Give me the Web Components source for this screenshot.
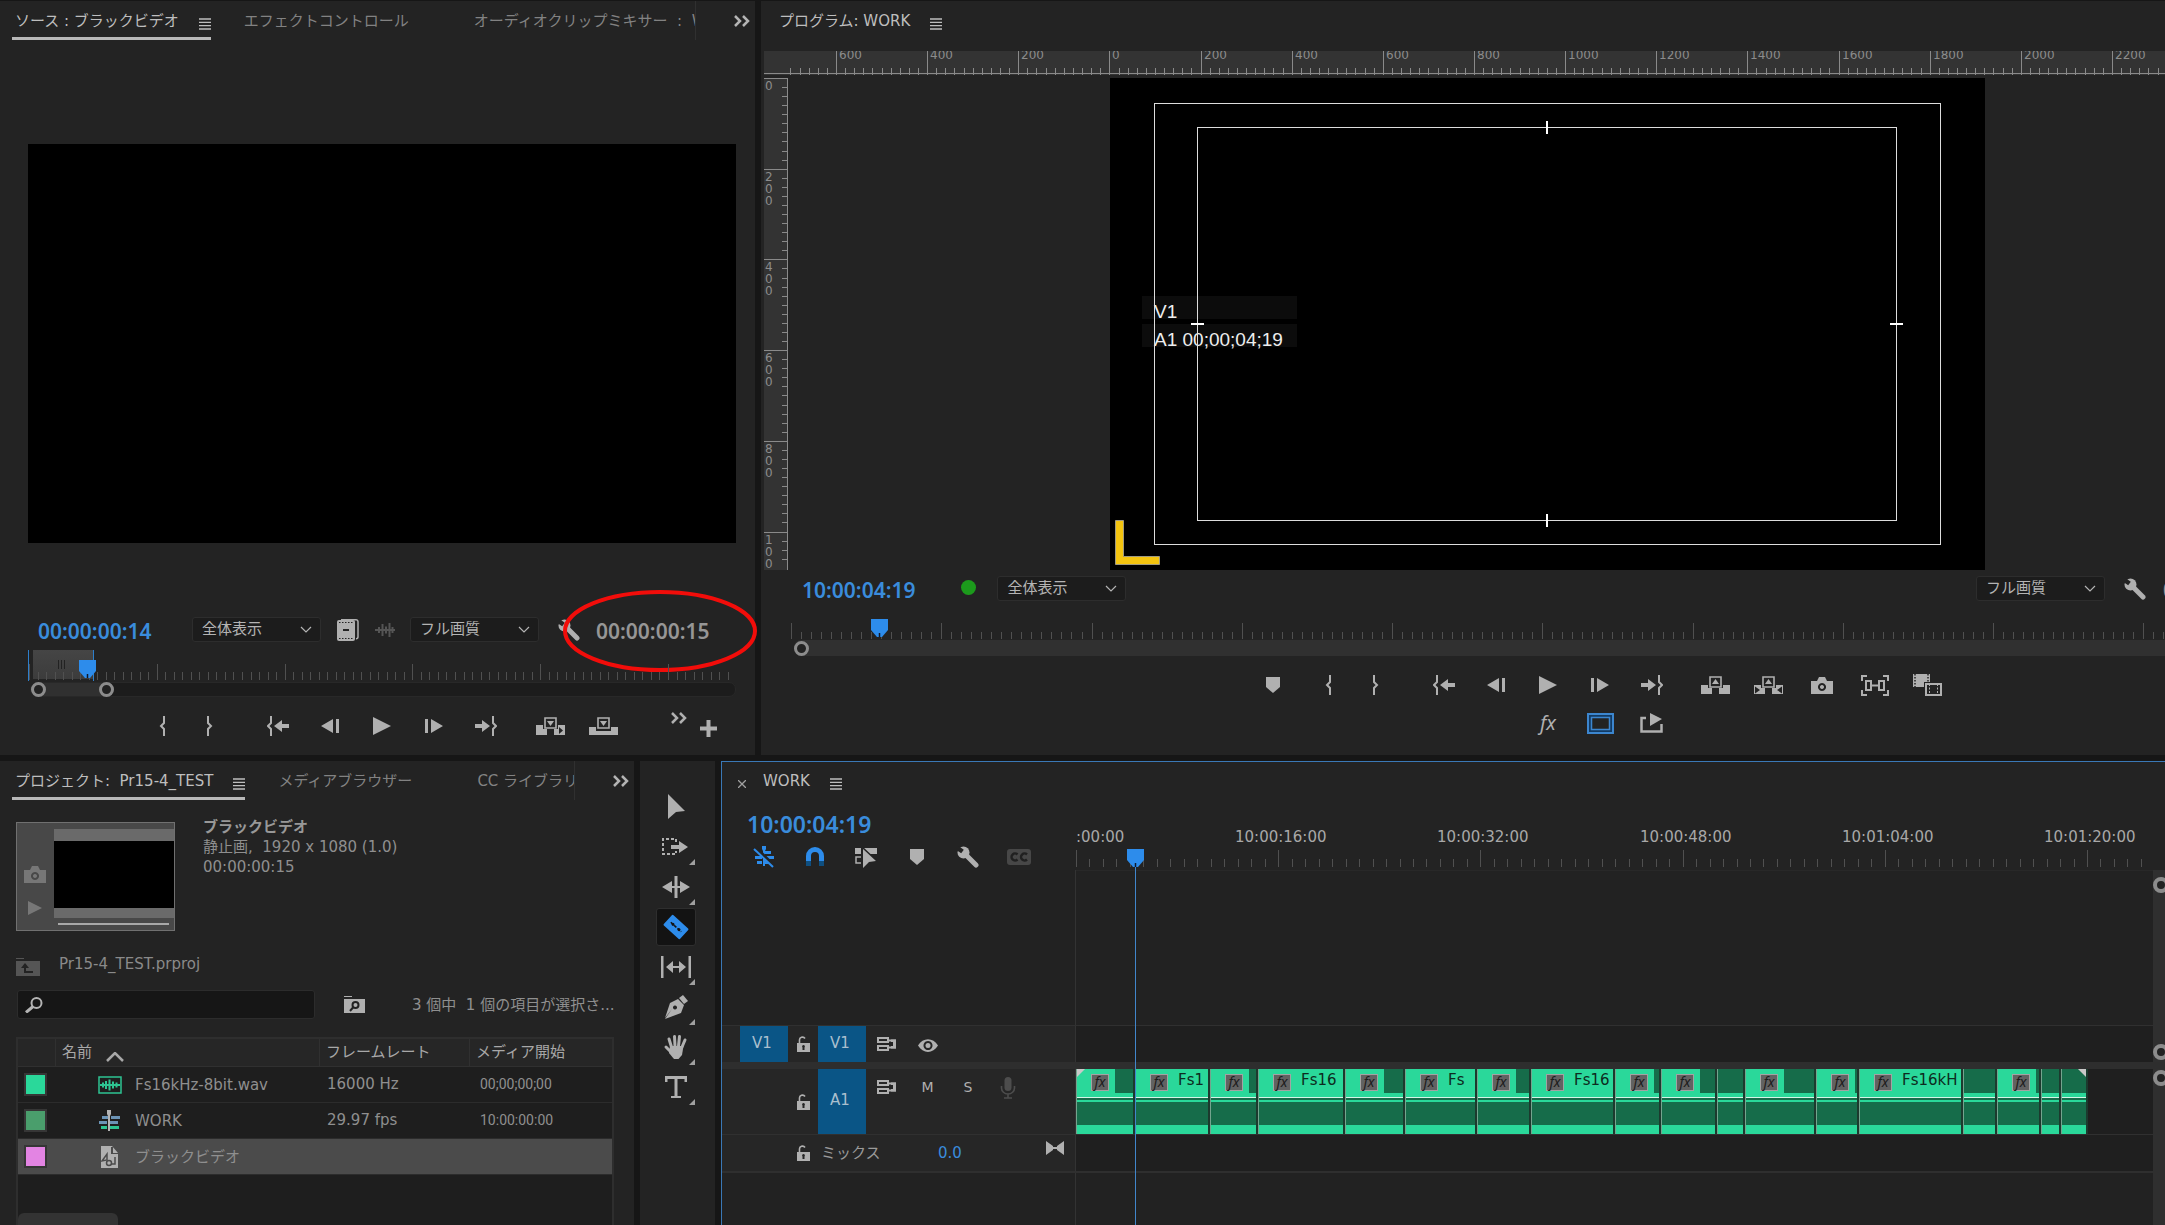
<!DOCTYPE html>
<html lang="ja">
<head>
<meta charset="utf-8">
<title>WORK</title>
<style>
  html, body { margin: 0; height: 100%; background: #161616; overflow: hidden; }
  body { font: 15px/20px "DejaVu Sans", "Noto Sans CJK JP", sans-serif; color: #b4b4b4; }
</style>
</head>
<body>
<editor-app></editor-app>
<script>
const base = `<style>
  :host { display: block; box-sizing: border-box; }
  * { box-sizing: border-box; }
  button, input, select { font: inherit; color: inherit; margin: 0; border: 0; background: none; padding: 0; outline: 0; }
</style>`;
const define = (tag, render) => customElements.define(tag, class extends HTMLElement {
  connectedCallback() {
    if (this.shadowRoot) return;
    this.attachShadow({ mode: "open" }).innerHTML = base + render(this);
  }
});

/* ---------- icons: [width, height, markup] ---------- */
const B = "#232323";
const box = `<path fill="${B}" d="M7 0h15v12H7z"/><path fill="none" stroke="currentColor" stroke-width="1.6" d="M9 1h11v10H9z"/>`;
const icons = {
  marker: [14, 16, `<path d="M0 0h14v10l-7 6-7-6z"/>`],
  braceIn: [8, 20, `<path fill="none" stroke="currentColor" stroke-width="2" d="M6 0v7L3 10l3 3v7"/>`],
  braceOut: [8, 20, `<path fill="none" stroke="currentColor" stroke-width="2" d="M2 0v7l3 3-3 3v7"/>`],
  gotoIn: [22, 20, `<path fill="none" stroke="currentColor" stroke-width="2" d="M4 0v7l-3 3 3 3v7"/><path d="M22 8h-7V4l-8 6 8 6v-4h7z"/>`],
  gotoOut: [22, 20, `<path fill="none" stroke="currentColor" stroke-width="2" d="M18 0v7l3 3-3 3v7"/><path d="M0 8h7V4l8 6-8 6v-4H0z"/>`],
  stepBack: [18, 14, `<path d="M12 0v14L0 7zM15 0h3v14h-3z"/>`],
  stepFwd: [18, 14, `<path d="M6 0v14l12-7zM0 0h3v14H0z"/>`],
  play: [18, 18, `<path d="M0 0l18 9L0 18z"/>`],
  insert: [29, 18, `<path d="M0 8h11v10H0zM18 8h11v10H18z"/>${box}<path d="M11 4h7l-3.500 5z"/><path fill="${B}" d="M23 10l4 3.500-4 3.500z"/>`],
  overwrite: [29, 18, `<path d="M0 10h29v8H0z"/>${box}<path d="M11 4h7l-3.500 5z"/><path fill="${B}" d="M7 12h15v2H7z"/>`],
  lift: [29, 18, `<path d="M0 9h11v9H0zM18 9h11v9H18z"/>${box}<path d="M11 8h7l-3.500-5z"/>`],
  extract: [29, 18, `<path d="M0 9h11v9H0zM18 9h11v9H18z"/>${box}<path d="M11 8h7l-3.500-5z"/><path fill="${B}" d="M1 10.500l5 3.500-5 3.500zM28 10.500l-5 3.500 5 3.500z"/>`],
  camera: [22, 17, `<path fill-rule="evenodd" d="M0 4h6l2-4h6l2 4h6v13H0zM11 6a4 4 0 1 0 .01 0zM11 8a2 2 0 1 1-.01 0z"/>`],
  compare: [28, 21, `<g fill="none" stroke="currentColor" stroke-width="2"><path d="M1 6V1h5M22 1h5v5M27 15v5h-5M6 20H1v-5M5 6h5v9H5zM18 6h5v9h-5zM10 10.500h8"/></g>`],
  proxy: [29, 22, `<path d="M0 0h17v13H0z"/><path stroke="${B}" stroke-width="1.500" stroke-dasharray="1.500 1.500" d="M2 0v13M15 0v13"/><path fill="${B}" d="M11 8h18v14H11z"/><path fill="none" stroke="currentColor" stroke-width="2" d="M13 10h15v11H13z"/><path stroke="currentColor" stroke-dasharray="2 1.500" d="M16.500 10v11M24.500 10v11"/>`],
  safe: [27, 21, `<path fill="#123a63" stroke="#3c86cf" stroke-width="2" d="M1 1h25v19H1z"/><path fill="${B}" stroke="#3c86cf" stroke-width="1.500" d="M4.500 4.500h18v12h-18z"/>`],
  exportFrame: [24, 20, `<path fill="none" stroke="currentColor" stroke-width="2.500" d="M6 5H1.500v13.500h20V11"/><path d="M10 0l12 6-12 7z"/>`],
  wrench: [22, 22, `<circle cx="6.500" cy="6.500" r="6"/><path stroke="currentColor" stroke-width="5" stroke-linecap="round" d="M8 8l11 11"/><path stroke="${B}" stroke-width="4.500" d="M-1 1l6.500 4.500"/>`],
  film: [22, 22, `<rect x="0" y="1" width="18" height="21" rx="2"/><path fill="none" stroke="currentColor" stroke-width="1.500" d="M4 .8h15a2 2 0 0 1 2 2v15a2 2 0 0 1-2 2"/><path fill="none" stroke="${B}" stroke-dasharray="1.500 1.500" d="M2 3.500h15M2 19.500h15"/><path stroke="${B}" stroke-width="2" d="M6 11h6"/>`],
  wave: [20, 14, `<path fill="none" stroke="currentColor" stroke-width="2" d="M0 7h20M4 4v6M7.500 1v12M11 3.500v7M14.500 0v14M17.500 4v6"/>`],
  more: [16, 12, `<path fill="none" stroke="currentColor" stroke-width="2.500" d="M1 1l5 5-5 5M9 1l5 5-5 5"/>`],
  plus: [17, 17, `<path d="M6.500 0h4v6.500H17v4h-6.500V17h-4v-6.500H0v-4h6.500z"/>`],
  menu: [12, 12, `<path stroke="currentColor" stroke-width="1.300" d="M0 1h12M0 4.300h12M0 7.700h12M0 11h12"/>`],
  close: [8, 8, `<path stroke="currentColor" stroke-width="1.300" d="M0 0l8 8M8 0L0 8"/>`],
  chevron: [12, 7, `<path fill="none" stroke="currentColor" stroke-width="1.200" d="M1 1l5 5 5-5"/>`],
  sortUp: [18, 10, `<path fill="none" stroke="currentColor" stroke-width="2.500" d="M1 9l8-8 8 8"/>`],
  playSmall: [14, 14, `<path d="M0 0l14 7-14 7z"/>`],
  folderUp: [24, 18, `<path d="M0 0h8v1H0zM0 3h24v15H0z"/><path fill="none" stroke="${B}" stroke-width="2" d="M9 9v5h8"/><path fill="${B}" d="M5 10l4-5 4 5z"/>`],
  search: [18, 16, `<circle cx="11.500" cy="6" r="5" fill="none" stroke="currentColor" stroke-width="2"/><path stroke="currentColor" stroke-width="3" d="M8 9.500L1 15.500"/>`],
  folderSearch: [21, 17, `<path d="M0 0h8v1H0zM0 3h21v14H0z"/><circle cx="11.500" cy="9" r="3" fill="none" stroke="${B}" stroke-width="2"/><path stroke="${B}" stroke-width="2" d="M9 11.500L6 15"/>`],
  audio: [24, 18, `<g fill="none" stroke="#2ec492"><path stroke-width="1.500" d="M1 1h22v16H1z"/><path stroke-width="2" d="M2 9h20M5 6.500v5M8 5v8M11.500 3.500v11M15 5.500v7M18.500 6.500v5"/></g>`],
  sequence: [24, 22, `<path fill="#6b93b5" d="M4 6h7v3H4zM13 6h9v3h-9zM1 11h8v3H1zM12 11h8v3h-8z"/><path fill="#2ec492" d="M3 16h6v3H3zM12 16h9v3h-9z"/><path fill="#b4b4b4" d="M9 0h4v4l-1 2v15h-2V6L9 4z"/>`],
  still: [24, 22, `<path d="M3 0h11l6 7v15H3z"/><path fill="#4b4b4b" d="M13 1v7h7v-1h-5V1z"/><path fill="none" stroke="#4b4b4b" stroke-width="1.500" d="M4 15l5-7v6zM17 11v7h-4"/><circle cx="11" cy="17" r="2.500" fill="none" stroke="#4b4b4b" stroke-width="1.500"/>`],
  select: [20, 26, `<path d="M2 0l17 17-9 1-8 7z"/>`],
  trackSelect: [28, 18, `<path fill="none" stroke="currentColor" stroke-width="2" stroke-dasharray="3 2" d="M14 4V1H1v15h13v-3"/><path d="M9 7h8V3l9 6-9 6v-4H9z"/>`],
  ripple: [30, 22, `<path d="M13.500 0h3v22h-3zM11 5v12L1 11zM19 5v12l10-6z"/><path d="M9 10h12v2H9z"/>`],
  razor: [26, 26, `<g transform="rotate(42 13 13)"><rect x="2" y="6" width="22" height="14" rx="1"/><path fill="none" stroke="#131313" stroke-width="1.500" stroke-dasharray="3 1.500" d="M6 13h14"/><circle cx="9" cy="13" r="1.500" fill="#131313"/><circle cx="17" cy="13" r="1.500" fill="#131313"/></g>`],
  slip: [30, 22, `<path d="M0 0h2.500v22H0zM27.500 0H30v22h-2.500zM12 5v12l-7-6zM18 5v12l7-6z"/><path d="M9 10h12v2H9z"/>`],
  pen: [26, 26, `<path d="M16 4l4-3 5 6-4 3z"/><path fill-rule="evenodd" d="M15 5l6 6-3 8-16 6 7-10-7 9 5-15zM12 11.500a2 2 0 1 0 .01 0z"/>`],
  hand: [26, 26, `<g fill="none" stroke="currentColor" stroke-width="3" stroke-linecap="round"><path d="M8.500 13L6 5M12 12l-.5-9.500M15.500 12l1-9.500M19 13l3-7M8 18l-5-5"/></g><path d="M7 12h13.500l-1.500 9-3.500 4H11l-5-6z"/>`],
  type: [24, 24, `<path d="M1 1h22v6h-2.500V4h-7v17h3.500v2H7v-2h3.500V4h-7v3H1z"/>`],
  nest: [24, 22, `<path d="M3 10h7v3H3zM13 5h6v3h-6zM14 10h8v3h-8zM5 15h5v3H5zM12 15h6v3h-6z"/><path d="M10 0h4v3l-1 2v15h-2V5l-1-2z"/><path stroke="${B}" stroke-width="3.500" d="M3 1l19 19"/><path stroke="currentColor" stroke-width="2" d="M2 3l19 18"/>`],
  magnet: [18, 20, `<path fill="none" stroke="currentColor" stroke-width="5" d="M2.500 14V9a6.500 6.500 0 0 1 13 0v5"/><path fill="none" stroke="#0f4f80" stroke-width="5" d="M2.500 14v5M15.500 14v5"/>`],
  linked: [24, 22, `<path d="M1 2h6v6H1zM9 2h14v6H9z"/><path fill="none" stroke="currentColor" stroke-width="1.500" d="M7 11H2v6h5"/><path fill="${B}" d="M8 0l16 15-9 1-7 6z"/><path d="M9 3l13 12-7 1-6 6z"/><path d="M12 2h11v6h-5z"/>`],
  cc: [24, 16, `<rect width="24" height="16" rx="3" fill="#474747"/><path fill="none" stroke="#202020" stroke-width="2.500" d="M10.500 5.500a3.500 3.500 0 1 0 0 5M20 5.500a3.500 3.500 0 1 0 0 5"/>`],
  lock: [14, 16, `<path fill-rule="evenodd" d="M1 7h13v9H1zM7.500 9a1.500 1.500 0 0 0-1 2.500V14h2v-2.500a1.500 1.500 0 0 0-1-2.500z"/><path fill="none" stroke="currentColor" stroke-width="1.600" d="M3.500 8V4.500a3 3 0 0 1 5.500-2"/>`],
  sync: [20, 14, `<g fill="none" stroke="currentColor" stroke-width="2"><path d="M1 1h10v4H1zM1 9h10v4H1zM12 3.500h6v7h-6"/></g><path d="M14 2.500h5v9h-5z"/><path fill="${B}" d="M12 5h4v4h-4z"/>`],
  eye: [20, 13, `<path fill-rule="evenodd" d="M0 6.500C5-2 15-2 20 6.500 15 15 5 15 0 6.500zM10 2a4.500 4.500 0 1 0 .01 0z"/><circle cx="10" cy="6.500" r="2.500"/>`],
  mic: [16, 22, `<rect x="4.500" y="0" width="7" height="14" rx="3.500"/><path fill="none" stroke="currentColor" stroke-width="1.600" d="M1.500 9v2a6.500 6 0 0 0 13 0V9M8 17v4M4 21h8"/>`],
  bowtie: [18, 14, `<path d="M0 0l7 5v4l-7 5zM18 0l-7 5v4l7 5z"/><path d="M7 6h4v2H7z"/>`],
  playhead: [17, 18, `<path fill="#2d8ceb" d="M0 0h17v11l-6 7H6l-6-7z"/><path stroke="#10182a" stroke-width="1.500" d="M8.500 14v4"/>`]
};
define("ui-icon", el => {
  const [w, h, g] = icons[el.getAttribute("name")];
  return `<style>:host{display:block;flex:none;width:${w}px;height:${h}px}svg{display:block}</style>
    <svg width="${w}" height="${h}" viewBox="0 0 ${w} ${h}" fill="currentColor" aria-hidden="true">${g}</svg>`;
});
define("icon-button", el => `<style>
    :host{display:grid;flex:none}
    button{display:grid;place-items:center;width:100%;height:100%;min-height:inherit}
  </style><button aria-label="${el.getAttribute("label")}">${el.hasAttribute("name") ? `<ui-icon name="${el.getAttribute("name")}"></ui-icon>` : "<slot></slot>"}</button>`);

/* ---------- tabs ---------- */
define("panel-tab", el => `<style>
    :host{flex:none;height:39px;border-bottom:3px solid transparent;color:#828282}
    :host([active]){border-color:#b8b8b8;color:#bebebe}
    button{display:flex;align-items:flex-start;gap:20px;padding:10px 0 0 3px;white-space:nowrap;line-height:20px}
    ui-icon{margin-top:7px;visibility:hidden}
    :host([active]) ui-icon, :host([plain]) ui-icon{visibility:visible}
    :host([plain]){color:#bebebe}
  </style><button role="tab"><span><slot></slot></span><ui-icon name="menu"></ui-icon></button>`);
define("tab-bar", el => `<style>
    :host{display:flex;height:39px;flex:none;padding-left:12px}
    .clip{display:flex;gap:30px;overflow:hidden;flex:1}
    :host([overflowing]) .clip{border-right:1px solid #303030}
    icon-button{width:59px;height:28px;color:#b4b4b4;padding-left:32px;margin-top:6px}
  </style><div class="clip" role="tablist"><slot></slot></div>${el.hasAttribute("overflowing") ? `<icon-button name="more" label="その他のパネル"></icon-button>` : ""}`);

/* ---------- drop-down ---------- */
define("drop-down", el => `<style>
    :host{display:grid;grid-template-columns:1fr 20px;width:129px;height:25px;border:1px solid #2d2d2d;border-radius:3px;background:#1c1c1c;color:#b4b4b4;align-items:center;flex:none}
    select{appearance:none;grid-area:1/1/2/3;width:100%;height:100%;padding:0 20px 2px 9px}
    ui-icon{grid-area:1/2;pointer-events:none}
  </style><select aria-label="${el.getAttribute("label")}"><option>${el.getAttribute("value")}</option></select><ui-icon name="chevron"></ui-icon>`);

define("time-code", el => `<style>
    :host{font:600 21px/28px "Noto Sans",sans-serif;color:#3a8cdc;flex:none;white-space:nowrap;padding-top:2px}
    :host([muted]){color:#969696}
    :host([large]){font-size:23px}
  </style><slot></slot>`);

/* ---------- tick scales ---------- */
define("tick-scale", el => {
  const n = k => +el.getAttribute(k) || 0;
  const origin = n("origin"), step = n("step"), div = n("div"), from = n("from"), to = n("to") || 3000;
  const top = n("major"), sub = n("minor"), end = n("end");
  const vertical = el.hasAttribute("vertical"), labels = (el.getAttribute("labels") || "").split("|");
  const first = +(el.getAttribute("first") || 0);
  let d = "", t = "";
  for (let i = Math.ceil((from - origin) / step * div); ; i++) {
    const p = Math.round(origin + i * step / div);
    if (p > to) break;
    const a = i % div ? sub : top;
    d += vertical ? `M${a} ${p}H${end}v1H${a}z` : `M${p} ${a}V${end}h1V${a}z`;
  }
  labels.forEach((s, i) => {
    if (!s) return;
    const p = Math.round(origin + (i + first) * step);
    if (vertical) [...s].forEach((c, k) => t += `<text x="1" y="${p + 12 * (k + 1)}">${c}</text>`);
    else t += `<text x="${p + n(i || !el.hasAttribute("dx0") ? "dx" : "dx0")}" y="${n("base")}">${s}</text>`;
  });
  return `<style>
    :host{overflow:hidden}
    svg{display:block;width:100%;height:100%;shape-rendering:crispEdges;font-size:${n("size") || 15}px}
  </style><svg><path fill="${el.getAttribute("color") || "#505050"}" d="${d}"/><g fill="${el.getAttribute("ink") || "#a8a8a8"}">${t}</g></svg>`;
});

define("zoom-bar", el => `<style>
    :host{display:flex;height:16px;flex:none}
    i{flex:none;width:15px;height:15px;border:3px solid #8c8c8c;border-radius:50%;background:#222}
    .track{flex:1;display:flex;align-items:center;background:#1c1c1c;border:1px solid #282828;border-radius:7px}
    .thumb{display:flex;align-items:center;justify-content:space-between;height:100%;background:#303030;border-radius:7px;width:83px}
    :host([full]) .track{border:0;background:none}
    :host([full]) .thumb{width:100%;border-radius:7px 0 0 7px}
  </style><div class="track"><div class="thumb"><i></i>${el.hasAttribute("full") ? "" : "<i></i>"}</div></div>`);

/* ---------- transport ---------- */
define("button-group", () => `<style>
    :host{display:flex;height:32px;flex:none}
    ::slotted(icon-button){width:var(--cell,52px);color:#b0b0b0}
  </style><slot></slot>`);

/* ---------- source monitor ---------- */
define("source-monitor", () => `<style>
    :host{display:flex;flex-direction:column;background:#232323;position:relative;z-index:1;min-width:0}
    .stage{flex:1;background:#000;margin:104px 19px 74px 28px}
    .bar{display:flex;align-items:center;height:25px;padding-left:38px;color:#b0b0b0}
    time-code{width:154px}
    .film{margin:0 16px}
    .wave{color:#555;margin-right:15px}
    .tool{margin:0 16px 0 19px}
    .dur{position:relative}
    .dur time-code{width:auto}
    .dur svg{position:absolute;left:-33px;top:-25px;overflow:visible}
    .scrub{height:31px;margin:8px 19px 1px 28px;position:relative;background:linear-gradient(#454545,#3c3c3c) 5px 0/60px 29px no-repeat}
    .scrub::before{content:"";position:absolute;left:0;top:0;width:64px;height:31px;border-left:1px solid #2d7fcc;border-right:1px solid #2d7fcc}
    tick-scale{position:relative;height:100%}
    .grip{position:absolute;left:30px;top:10px;width:7px;height:9px;background:repeating-linear-gradient(90deg,#222 0 1px,transparent 1px 3px)}
    .head{position:absolute;left:51px;top:10px}
    zoom-bar{margin:0 19px 0 30px;height:15px}
    .row{display:flex;margin:13px 0;padding:0 38px 0 138px;gap:18px;height:32px}
    .row button-group:nth-child(3){margin-left:-6px}
    .extra{margin-left:auto;display:flex;gap:13px;color:#b0b0b0}
    .extra icon-button:first-child{height:16px}
    .extra icon-button:last-child{height:36px}
  </style>
  <tab-bar overflowing><panel-tab active>ソース : ブラックビデオ</panel-tab><panel-tab>エフェクトコントロール</panel-tab><panel-tab>オーディオクリップミキサー&nbsp;&nbsp;:&nbsp; W</panel-tab></tab-bar>
  <div class="stage"></div>
  <div class="bar">
    <time-code>00:00:00:14</time-code>
    <drop-down label="ズームレベル" value="全体表示"></drop-down>
    <icon-button class="film" name="film" label="ビデオのみドラッグ"></icon-button>
    <icon-button class="wave" name="wave" label="オーディオのみドラッグ"></icon-button>
    <drop-down label="再生時の解像度" value="フル画質"></drop-down>
    <icon-button class="tool" name="wrench" label="設定"></icon-button>
    <div class="dur"><time-code muted>00:00:00:15</time-code>
      <svg width="194" height="82" aria-hidden="true"><ellipse cx="97" cy="41" rx="95" ry="39" fill="none" stroke="#f20d0a" stroke-width="4"/></svg></div>
  </div>
  <div class="scrub"><tick-scale origin="1" step="127.8" div="15" major="14" minor="22" end="30"></tick-scale><div class="grip"></div><ui-icon class="head" name="playhead"></ui-icon></div>
  <zoom-bar></zoom-bar>
  <div class="row">
    <button-group style="--cell:48px"><icon-button name="braceIn" label="インをマーク"></icon-button><icon-button name="braceOut" label="アウトをマーク"></icon-button></button-group>
    <button-group><icon-button name="gotoIn" label="インへ移動"></icon-button><icon-button name="stepBack" label="1 フレーム前へ"></icon-button><icon-button name="play" label="再生"></icon-button><icon-button name="stepFwd" label="1 フレーム先へ"></icon-button><icon-button name="gotoOut" label="アウトへ移動"></icon-button></button-group>
    <button-group style="--cell:53px"><icon-button name="insert" label="インサート"></icon-button><icon-button name="overwrite" label="上書き"></icon-button></button-group>
    <div class="extra"><icon-button name="more" label="その他"></icon-button><icon-button name="plus" label="ボタンエディター"></icon-button></div>
  </div>`);

/* ---------- program monitor ---------- */
define("program-monitor", () => `<style>
    :host{display:flex;flex-direction:column;background:#232323;min-width:0;overflow:hidden}
    tab-bar{padding-left:15px}
    .hr{height:24px;margin:11px 0 3px 3px;background:linear-gradient(#8a8a8a,#8a8a8a) 0 22px/100% 1px no-repeat,#333}
    .view{flex:1;display:flex;min-height:0;padding-left:3px}
    .vr{width:24px;margin-bottom:3px;background:#333;border-right:1px solid #8a8a8a;flex:none}
    .frame{position:relative;height:100%;aspect-ratio:16/9;margin-left:322px;background:#000;flex:none;color:#eee;font:19px/23px "Liberation Sans",sans-serif}
    .osd{position:absolute;left:32px;top:218px;width:155px;display:grid;gap:5px}
    .osd span{background:#0c0c0c;padding:4px 0 0 12px;height:23px;line-height:24px}
    .safe{position:absolute;border:1px solid #ddd}
    .action{inset:5%}
    .title{inset:10%}
    .title i{position:absolute;background:#fff}
    .t,.b{width:2px;height:13px;left:calc(50% - 1px)} .t{top:-7px} .b{bottom:-7px}
    .l,.r{height:2px;width:13px;top:calc(50% - 1px)} .l{left:-7px} .r{right:-7px}
    .mark{position:absolute;left:5px;bottom:5px}
    .bar{display:flex;align-items:center;height:25px;margin:6px 0 18px;padding-left:41px;color:#b0b0b0}
    .dot{width:15px;height:15px;border-radius:50%;background:#1c9a1c;margin:-3px 21px 0 46px}
    .right{margin-left:auto;display:flex;align-items:center;width:189px}
    .right icon-button{margin:0 17px 0 19px}
    .scrub{height:21px;position:relative;margin-left:30px;flex:none}
    tick-scale{height:100%}
    .scrub ui-icon{position:absolute;left:80px;top:0}
    zoom-bar{margin-left:33px}
    .row{display:flex;margin-top:13px;padding-left:488px}
    .row>:nth-child(2){margin:0 18px 0 7px}
    .row>:nth-child(4){margin-left:11px}
    .row2{display:flex;margin:6px 0 16px;padding-left:761px}
    em{font:italic 20px/24px "Noto Sans",sans-serif}
  </style>
  <tab-bar><panel-tab plain>プログラム: WORK</panel-tab></tab-bar>
  <tick-scale class="hr" origin="345.4" step="91.14" div="10" from="24" major="0" minor="17" end="24" color="#8a8a8a" ink="#8c8c8c" size="12" base="8" dx="3" first="-3" labels="600|400|200|0|200|400|600|800|1000|1200|1400|1600|1800|2000|2200"></tick-scale>
  <div class="view">
    <tick-scale class="vr" vertical origin="0" step="90.7" div="10" to="489" major="0" minor="18" end="24" color="#8a8a8a" ink="#8c8c8c" size="12" labels="0|200|400|600|800|1000"></tick-scale>
    <div class="frame">
      <div class="osd"><span>V1</span><span>A1 00;00;04;19</span></div>
      <div class="safe action"></div>
      <div class="safe title"><i class="t"></i><i class="b"></i><i class="l"></i><i class="r"></i></div>
      <svg class="mark" width="45" height="45" aria-hidden="true"><path d="M.5 .5h8v36h36v8h-44z" fill="#f4c40f" stroke="#a09a80"/></svg>
    </div>
  </div>
  <div class="bar"><time-code>10:00:04:19</time-code><div class="dot"></div><drop-down label="ズームレベル" value="全体表示"></drop-down>
    <div class="right"><drop-down label="再生時の解像度" value="フル画質"></drop-down><icon-button name="wrench" label="設定"></icon-button><time-code muted>0</time-code></div></div>
  <div class="scrub"><tick-scale origin="0" step="150.26" div="15" major="4" minor="13" end="20"></tick-scale><ui-icon name="playhead"></ui-icon></div>
  <zoom-bar full></zoom-bar>
  <div class="row">
    <button-group style="--cell:48px"><icon-button name="marker" label="マーカーを追加"></icon-button></button-group>
    <button-group style="--cell:48px"><icon-button name="braceIn" label="インをマーク"></icon-button><icon-button name="braceOut" label="アウトをマーク"></icon-button></button-group>
    <button-group><icon-button name="gotoIn" label="インへ移動"></icon-button><icon-button name="stepBack" label="1 フレーム前へ"></icon-button><icon-button name="play" label="再生"></icon-button><icon-button name="stepFwd" label="1 フレーム先へ"></icon-button><icon-button name="gotoOut" label="アウトへ移動"></icon-button></button-group>
    <button-group style="--cell:53px"><icon-button name="lift" label="リフト"></icon-button><icon-button name="extract" label="抽出"></icon-button><icon-button name="camera" label="フレームを書き出し"></icon-button><icon-button name="compare" label="比較表示"></icon-button><icon-button name="proxy" label="プロキシの切り替え"></icon-button></button-group>
  </div>
  <div class="row2"><button-group><icon-button label="グローバル FX ミュート"><em>fx</em></icon-button><icon-button name="safe" label="セーフマージン"></icon-button><icon-button name="exportFrame" label="クイック書き出し"></icon-button></button-group></div>`);

/* ---------- project panel ---------- */
define("project-panel", () => {
  const row = (c, ic, name, rate, start, cls = "") => `<tr class="${cls}"><td><i style="background:${c}"></i></td><td class="n"><div><ui-icon name="${ic}"></ui-icon>${name}</div></td><td>${rate}</td><td class="tc">${start}</td></tr>`;
  return `<style>
    :host{display:flex;flex-direction:column;background:#232323;color:#8f8f8f;min-width:0;overflow:hidden}
    .info{display:flex;gap:28px;padding:17px 16px 0}
    .thumb{margin-top:5px;width:159px;height:109px;border:1px solid #707070;background:#484848;display:flex;color:#777}
    .side{width:37px;display:grid;justify-items:center;align-content:end;gap:18px;padding:0 2px 15px 0}
    .pic{flex:1;display:flex;flex-direction:column;padding-top:6px}
    .pic b{background:#6a6a6a;height:12px}.pic b+u+b{height:10px}
    .pic u{background:#000;height:67px}
    .pic s{background:#a8a8a8;height:2px;margin:5px 5px 0 4px}
    .meta strong{color:#989898}
    .path{display:flex;gap:19px;height:22px;padding-left:16px;margin:23px 0 14px;align-items:flex-end;color:#8a8a8a}
    .path ui-icon{color:#555}
    .path span{align-self:flex-start}
    .find{display:flex;align-items:center;padding:0 16px 0 17px;white-space:nowrap}
    label{display:flex;align-items:center;gap:8px;width:298px;height:29px;padding-left:7px;background:#161616;border:1px solid #2c2c2c;border-radius:3px;color:#b4b4b4}
    input{flex:1;min-width:0}
    .find icon-button{margin:0 47px 0 29px;color:#b0b0b0}
    .list{flex:1;margin:18px 20px 0 16px;border:2px solid #2e2e2e;border-bottom:0;background:#1e1e1e;display:flex;flex-direction:column}
    table{border-collapse:separate;border-spacing:0;table-layout:fixed;width:100%}
    th{font-weight:400;text-align:left;height:28px;padding:0 0 1px 6px;background:#262626;color:#a8a8a8;border-bottom:1px solid #303030;border-left:1px solid #303030}
    th:first-child{border-left:0}
    th div{display:flex;gap:14px;align-items:flex-end}
    td{height:36px;padding:0 0 2px 8px;border-bottom:1px solid #2c2c2c}
    td:first-child{padding:0 0 0 6px}
    td i{display:block;width:23px;height:23px;border:2px solid #363636}
    td.n{padding:1px 0 0 43px}
    .n div{display:flex;gap:13px;align-items:center}
    td.tc{font:14px/20px Roboto,sans-serif;padding-left:11px}
    .sel td{background:#4b4b4b}
    .sel ui-icon{color:#b0b0b0}
    .thumbbar{margin-top:auto;width:100px;height:12px;background:#333;border-radius:6px 6px 0 0}
  </style>
  <tab-bar overflowing><panel-tab active>プロジェクト:&nbsp; Pr15-4_TEST</panel-tab><panel-tab>メディアブラウザー</panel-tab><panel-tab>CC ライブラリ</panel-tab></tab-bar>
  <div class="info"><div class="thumb"><div class="side"><ui-icon name="camera"></ui-icon><ui-icon name="playSmall"></ui-icon></div><div class="pic"><b></b><u></u><b></b><s></s></div></div>
    <div class="meta"><strong>ブラックビデオ</strong><br>静止画,&nbsp; 1920 x 1080 (1.0)<br>00:00:00:15</div></div>
  <div class="path"><ui-icon name="folderUp"></ui-icon><span>Pr15-4_TEST.prproj</span></div>
  <div class="find"><label><ui-icon name="search"></ui-icon><input type="search" aria-label="検索"></label><icon-button name="folderSearch" label="検索ビンを作成"></icon-button><span>3 個中&nbsp; 1 個の項目が選択さ...</span></div>
  <div class="list"><table><colgroup><col style="width:37px"><col style="width:264px"><col style="width:150px"><col></colgroup>
    <thead><tr><th></th><th><div>名前<ui-icon name="sortUp"></ui-icon></div></th><th>フレームレート</th><th>メディア開始</th></tr></thead>
    <tbody>${row("#2ad89a", "audio", "Fs16kHz-8bit.wav", "16000 Hz", "00;00;00;00")}${row("#4a9e6c", "sequence", "WORK", "29.97 fps", "10:00:00:00")}${row("#e384e3", "still", "ブラックビデオ", "", "", "sel")}</tbody></table>
    <div class="thumbbar"></div></div>`;
});

/* ---------- tools ---------- */
define("tool-bar", () => `<style>
    :host{display:flex;flex-direction:column;align-items:center;padding:26px 4px 0 0;background:#232323;color:#b0b0b0}
    div{display:grid;width:66px;height:40px;place-items:center;position:relative;flex:none}
    icon-button{width:40px;height:38px}
    .on icon-button{background:#131313;border:1px solid #2e2e2e;border-radius:3px;color:#2d8ceb}
    .c::after{content:"";position:absolute;right:14px;bottom:2px;border:3px solid transparent;border-right-color:#a0a0a0;border-bottom-color:#a0a0a0}
  </style>${[["select", "選択ツール"], ["trackSelect", "トラックの前方選択ツール", "c"], ["ripple", "リップルツール", "c"], ["razor", "レーザーツール", "on"], ["slip", "スリップツール", "c"], ["pen", "ペンツール", "c"], ["hand", "手のひらツール", "c"], ["type", "横書き文字ツール", "c"]]
    .map(([n, l, c = ""]) => `<div class="${c}"><icon-button name="${n}" label="${l}"></icon-button></div>`).join("")}`);

/* ---------- timeline ---------- */
const rows = "grid-template-rows:70px 155fr 37px 7px 65px 39px 52fr";
define("track-heads", () => `<style>
    :host{display:grid;${rows};color:#b0b0b0}
    .top{display:flex;flex-direction:column}
    time-code{padding-left:25px;margin-top:8px}
    .tools{display:flex;padding-left:16px;margin-top:8px}
    .tools icon-button{width:51px;height:22px}
    .blue{color:#2d8ceb}
    .gap{background:#222;border-right:1px solid #333}
    .band{background:#2e2e2e}
    .v,.a,.m{display:grid;grid-template-columns:18px 48px 30px 48px 42px 39px 42px 38px 1fr;background:#262626;border-right:1px solid #333}
    .v{border-top:1px solid #303030}
    .a{align-items:start}
    .v icon-button,.m icon-button{height:100%}
    .patch{background:#0a5586;color:#a9bfce;height:100%;padding:0 4px 2px 0}
    .v>.eye{padding-top:3px}
    .a>.row{height:35px}
    .a .lock{height:65px}
    .a .patch{padding-bottom:4px}
    .a .mic{color:#4d4d4d;height:38px}
    .m{grid-template-columns:66px 30px 120px 1fr 40px;border-top:1px solid #303030;border-bottom:2px solid #2f2f2f;align-items:center}
    .m .name{color:#9a9a9a;padding-left:3px}
    .m .val{color:#3a8cdc}
    .m .bow{padding-bottom:10px}
    .letter{font-size:14px}
  </style>
  <div class="top"><time-code large>10:00:04:19</time-code><div class="tools"><icon-button class="blue" name="nest" label="ネスト"></icon-button><icon-button class="blue" name="magnet" label="スナップ"></icon-button><icon-button name="linked" label="リンクされた選択"></icon-button><icon-button name="marker" label="マーカーを追加"></icon-button><icon-button name="wrench" label="タイムライン表示設定"></icon-button><icon-button name="cc" label="キャプション"></icon-button></div></div>
  <div class="gap"></div>
  <div class="v"><span></span><icon-button class="patch" label="ソース V1">V1</icon-button><icon-button name="lock" label="ロック"></icon-button><icon-button class="patch" label="ターゲット V1">V1</icon-button><icon-button name="sync" label="同期ロック"></icon-button><icon-button class="eye" name="eye" label="表示"></icon-button></div>
  <div class="band"></div>
  <div class="a"><span></span><span></span><icon-button class="lock" name="lock" label="ロック"></icon-button><icon-button class="patch" label="ターゲット A1">A1</icon-button><icon-button class="row" name="sync" label="同期ロック"></icon-button><icon-button class="row letter" label="ミュート">M</icon-button><icon-button class="row letter" label="ソロ">S</icon-button><icon-button class="mic" name="mic" label="録音"></icon-button></div>
  <div class="m"><span></span><icon-button name="lock" label="ロック"></icon-button><span class="name">ミックス</span><span class="val">0.0</span><icon-button class="bow" name="bowtie" label="キーフレーム"></icon-button></div>
  <div class="gap"></div>`);

define("audio-clip", el => {
  const name = el.getAttribute("name"), fx = el.hasAttribute("fx");
  return `<style>
    :host{flex:none;width:${el.getAttribute("span")}px;height:65px;position:relative;overflow:hidden;border-left:1px solid #74a48e;border-right:2px solid #1c3a2e;color:#0d2b20;
      background:linear-gradient(#166c4a 24px,#2ad89a 24px 28px,#d4f5e6 28px 29px,#166c4a 29px 31px,#2ad89a 31px 33px,#166c4a 33px 56px,#2ad89a 56px)}
    .head{height:24px;width:${name ? "100%" : "38px"};background:#2ad89a;display:flex;gap:10px;padding-left:14px;white-space:nowrap;overflow:hidden}
    .fx{flex:none;width:18px;height:17px;margin-top:5px;border:1px solid #a3a3a3;background:#626262;color:#1c1c1c;font:italic 14px/14px "Noto Sans",sans-serif;text-align:center}
    .head>:nth-child(2){line-height:20px;padding-top:1px}
    :host([start])::before,:host([end])::before{content:"";position:absolute;top:0;border:4px solid transparent;border-top-color:#c8c8c8}
    :host([start])::before{left:0;border-left-color:#c8c8c8}
    :host([end])::before{right:0;border-right-color:#c8c8c8}
  </style>${fx ? `<div class="head"><span class="fx">fx</span>${name ? `<span>${name}</span>` : ""}</div>` : ""}`;
});

define("track-lanes", () => {
  const clips = [[59, 1], [75, 1, "Fs1"], [48, 1], [87, 1, "Fs16"], [60, 1], [72, 1, "Fs"], [54, 1], [84, 1, "Fs16"], [46, 1], [56, 1], [28, 0], [71, 1], [43, 1], [104, 1, "Fs16kH"], [34, 0], [44, 1], [20, 0], [27, 0]];
  return `<style>
    :host{display:grid;${rows};position:relative;min-width:0;overflow:hidden}
    .gap{background:#222}
    .first{border-top:1px solid #282828}
    .v{background:#1f1f1f;border-top:1px solid #303030}
    .band{background:#2e2e2e}
    .a{display:flex;background:#1f1f1f}
    .m{background:#1f1f1f;border-top:1px solid #303030;border-bottom:2px solid #2f2f2f}
    .head{position:absolute;left:51px;top:49px}
    .line{position:absolute;left:59px;top:67px;bottom:0;width:1px;background:#4186cb}
  </style>
  <tick-scale origin="0" step="202.2" div="15" to="1070" major="50" minor="59" end="67" base="42" dx="-43" dx0="0" labels=":00:00|10:00:16:00|10:00:32:00|10:00:48:00|10:01:04:00|10:01:20:00"></tick-scale>
  <div class="gap first"></div><div class="v"></div><div class="band"></div>
  <div class="a">${clips.map(([w, fx, n], i) => `<audio-clip span="${w}"${fx ? " fx" : ""}${n ? ` name="${n}"` : ""}${i ? "" : " start"}${i == clips.length - 1 ? " end" : ""}></audio-clip>`).join("")}</div>
  <div class="m"></div><div class="gap"></div>
  <div class="line"></div><ui-icon class="head" name="playhead"></ui-icon>`;
});

define("timeline-panel", () => `<style>
    :host{display:flex;flex-direction:column;background:#232323;border:1px solid #3a78b6;border-width:1px 0 0 1px;min-width:0;overflow:hidden}
    .tabs{display:flex;height:38px;padding-left:12px;color:#a0a0a0}
    .tabs icon-button{width:16px;height:16px;margin:14px 10px 0 0}
    panel-tab{margin-top:-1px}
    .body{flex:1;display:grid;grid-template-columns:354px 1fr 12px;min-height:0}
    .bars{display:grid;${rows}}
    .s1{grid-row:2/4;background:#2f2f2f;display:flex;flex-direction:column;justify-content:space-between;padding-top:7px;padding-bottom:2px;overflow:hidden}
    .s2{grid-row:5/8;background:#2f2f2f;overflow:hidden;padding-top:1px}
    .band{grid-row:4;background:#2e2e2e}
    i{display:block;width:16px;height:16px;border:4px solid #8c8c8c;border-radius:50%;background:#222}
  </style>
  <div class="tabs"><icon-button name="close" label="閉じる"></icon-button><panel-tab plain>WORK</panel-tab></div>
  <div class="body"><track-heads></track-heads><track-lanes></track-lanes><div class="bars"><div class="s1"><i></i><i></i></div><div class="band"></div><div class="s2"><i></i></div></div></div>`);

define("editor-app", () => `<style>
    :host{display:grid;height:100vh;padding-top:1px;grid-template-rows:minmax(0,754fr) minmax(0,464fr);gap:6px}
    .top,.bottom{display:grid;gap:6px;min-height:0}
    .top{grid-template-columns:755fr 1404fr}
    .bottom{grid-template-columns:634fr 75px 1444fr}
  </style>
  <div class="top"><source-monitor></source-monitor><program-monitor></program-monitor></div>
  <div class="bottom"><project-panel></project-panel><tool-bar></tool-bar><timeline-panel></timeline-panel></div>`);
</script>
</body>
</html>
